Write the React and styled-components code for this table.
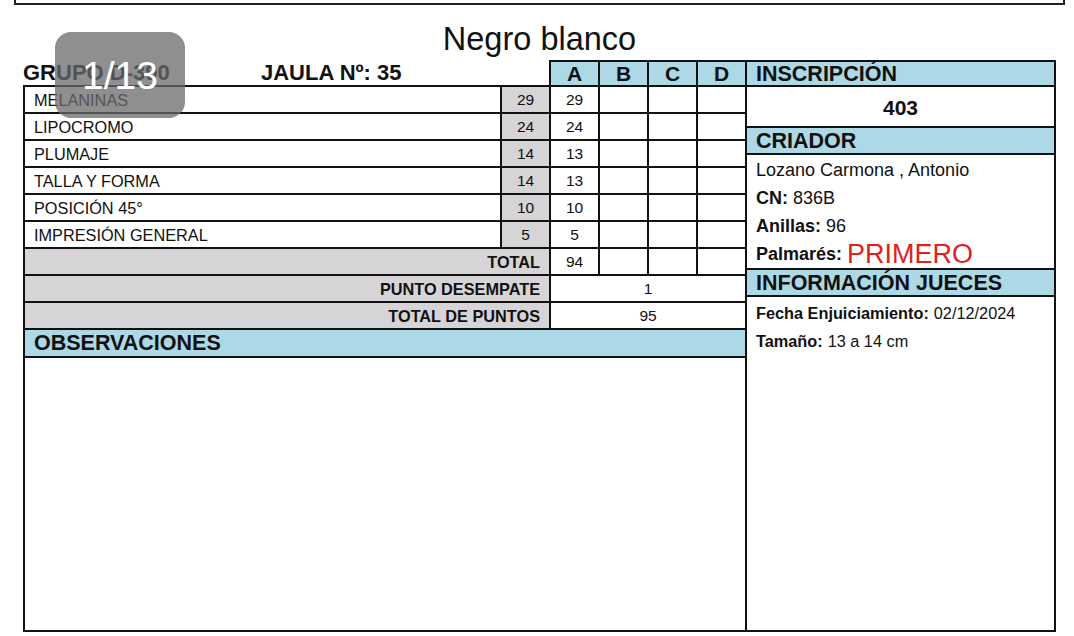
import React from 'react'
import styled, { createGlobalStyle } from 'styled-components'

const criteria = [
  ['MELANINAS', 29, 29],
  ['LIPOCROMO', 24, 24],
  ['PLUMAJE', 14, 13],
  ['TALLA Y FORMA', 14, 13],
  ['POSICIÓN 45°', 10, 10],
  ['IMPRESIÓN GENERAL', 5, 5],
];

export default function App() {
  return (
    <>
      <GlobalStyle />
      <Page>
        <TopBox />
        <Title>Negro blanco</Title>
        <Sheet>
          <LeftCol>
            <HeadRow>
              <Info>
                <Grupo>GRUPO D-390</Grupo>
                <span>JAULA Nº: 35</span>
              </Info>
              <ColHead $first>A</ColHead>
              <ColHead>B</ColHead>
              <ColHead>C</ColHead>
              <ColHead>D</ColHead>
            </HeadRow>
            <ScoreGrid>
              {criteria.map(([name, max, a]) => (
                <React.Fragment key={name}>
                  <Cell $pad="9px">{name}</Cell>
                  <Cell $tone="gray" $align="center" $size={15.5}>{max}</Cell>
                  <Cell $align="center" $size={15.5}>{a}</Cell>
                  <Cell />
                  <Cell />
                  <Cell />
                </React.Fragment>
              ))}
              <Cell $span={2} $tone="gray" $align="flex-end" $bold $pad="9px">TOTAL</Cell>
              <Cell $align="center" $size={15.5}>94</Cell>
              <Cell />
              <Cell />
              <Cell />
              <Cell $span={2} $tone="gray" $align="flex-end" $bold $pad="9px">PUNTO DESEMPATE</Cell>
              <Cell $span={4} $align="center" $size={15.5}>1</Cell>
              <Cell $span={2} $tone="gray" $align="flex-end" $bold $pad="9px">TOTAL DE PUNTOS</Cell>
              <Cell $span={4} $align="center" $size={15.5}>95</Cell>
              <Cell $span={6} $h={28} $tone="blue" $bold $size={21.5} $pad="9px">OBSERVACIONES</Cell>
            </ScoreGrid>
            <ObsArea />
          </LeftCol>

          <Panel>
            <PanelHead $h={25}>INSCRIPCIÓN</PanelHead>
            <Inscripcion>403</Inscripcion>
            <PanelHead>CRIADOR</PanelHead>
            <PanelInfo $grow={false}>
              <Line>Lozano Carmona , Antonio</Line>
              <Line><b>CN:</b> 836B</Line>
              <Line><b>Anillas:</b> 96</Line>
              <Line><b>Palmarés:</b> <Prize>PRIMERO</Prize></Line>
            </PanelInfo>
            <PanelHead>INFORMACIÓN JUECES</PanelHead>
            <PanelInfo $grow>
              <Line $size={16.3}><b>Fecha Enjuiciamiento:</b> 02/12/2024</Line>
              <Line $size={16.3}><b>Tamaño:</b> 13 a 14 cm</Line>
            </PanelInfo>
          </Panel>
        </Sheet>

        <PageBadge>1/13</PageBadge>
      </Page>
    </>
  )
}

const GlobalStyle = createGlobalStyle`
  body {
    margin: 0;
    background: #fff;
    font-family: "Liberation Sans", Arial, sans-serif;
    color: #111;
  }
  * { box-sizing: border-box; }
`;

const Page = styled.div`
  position: relative;
  width: 1074px;
  height: 636px;
  overflow: hidden;
`;

const TopBox = styled.div`
  margin-left: 14px;
  width: 1051px;
  height: 5px;
  border: 2px solid #222;
  border-top: none;
`;

const Title = styled.div`
  height: 55px;
  padding: 17px 0 0 5px;
  text-align: center;
  font-size: 32.5px;
  line-height: 34px;
`;

const Sheet = styled.div`
  display: flex;
  margin-left: 23px;
  width: 1033px;
  height: 572px;
`;

const LeftCol = styled.div`
  width: 724px;
  display: flex;
  flex-direction: column;
`;

const HeadRow = styled.div`
  display: grid;
  grid-template-columns: 526px 51px 49px 49px 49px;
  height: 25px;
`;

const Info = styled.div`
  display: flex;
  align-items: center;
  font-size: 22px;
  font-weight: bold;
  padding-top: 0;
`;

const Grupo = styled.span`
  width: 238px;
`;

const ColHead = styled.div`
  display: flex;
  align-items: center;
  justify-content: center;
  background: #add8e6;
  border-top: 2px solid #111;
  border-right: 2px solid #111;
  border-left: ${p => (p.$first ? '2px solid #111' : 'none')};
  font-size: 21px;
  font-weight: bold;
`;

const ScoreGrid = styled.div`
  display: grid;
  grid-template-columns: 477px 49px repeat(4, 49px);
  grid-auto-rows: 27px;
  border-top: 2px solid #111;
  border-left: 2px solid #111;
`;

const tones = { white: '#fff', gray: '#d7d4d7', blue: '#add8e6' };

const Cell = styled.div`
  grid-column: span ${p => p.$span || 1};
  ${p => (p.$h ? `height: ${p.$h}px;` : '')}
  display: flex;
  align-items: center;
  justify-content: ${p => p.$align || 'flex-start'};
  padding: 1px ${p => p.$pad || '0'} 0;
  background: ${p => tones[p.$tone || 'white']};
  border-right: 2px solid #111;
  border-bottom: 2px solid #111;
  font-size: ${p => p.$size || 16.3}px;
  font-weight: ${p => (p.$bold ? 'bold' : 'normal')};
  white-space: nowrap;
`;

const ObsArea = styled.div`
  flex: 1;
  border-left: 2px solid #111;
  border-right: 2px solid #111;
  border-bottom: 2px solid #111;
`;

const Panel = styled.div`
  width: 309px;
  display: flex;
  flex-direction: column;
  border-top: 2px solid #111;
  border-right: 2px solid #111;
  border-bottom: 2px solid #111;
`;

const PanelHead = styled.div`
  height: ${p => p.$h || 27}px;
  display: flex;
  align-items: center;
  padding: 1px 0 0 9px;
  background: #add8e6;
  border-bottom: 2px solid #111;
  font-size: 21.5px;
  font-weight: bold;
  white-space: nowrap;
`;

const Inscripcion = styled.div`
  height: 41px;
  display: flex;
  align-items: center;
  justify-content: center;
  padding-top: 3px;
  border-bottom: 2px solid #111;
  font-size: 21px;
  font-weight: bold;
`;

const PanelInfo = styled.div`
  ${p => (p.$grow ? 'flex: 1;' : 'border-bottom: 2px solid #111;')}
  padding: ${p => (p.$grow ? '2px' : '1px')} 0 0 9px;
`;

const Line = styled.div`
  height: 28px;
  display: flex;
  align-items: center;
  gap: 5px;
  font-size: ${p => p.$size || 18}px;
  white-space: nowrap;
  b { font-weight: bold; }
`;

const Prize = styled.span`
  color: #e3201f;
  font-size: 27px;
`;

const PageBadge = styled.div`
  position: absolute;
  left: 55px;
  top: 32px;
  width: 130px;
  height: 86px;
  border-radius: 16px;
  background: rgba(105, 105, 105, 0.75);
  color: #fff;
  display: flex;
  align-items: center;
  justify-content: center;
  font-size: 39px;
  padding-top: 2px;
`;
